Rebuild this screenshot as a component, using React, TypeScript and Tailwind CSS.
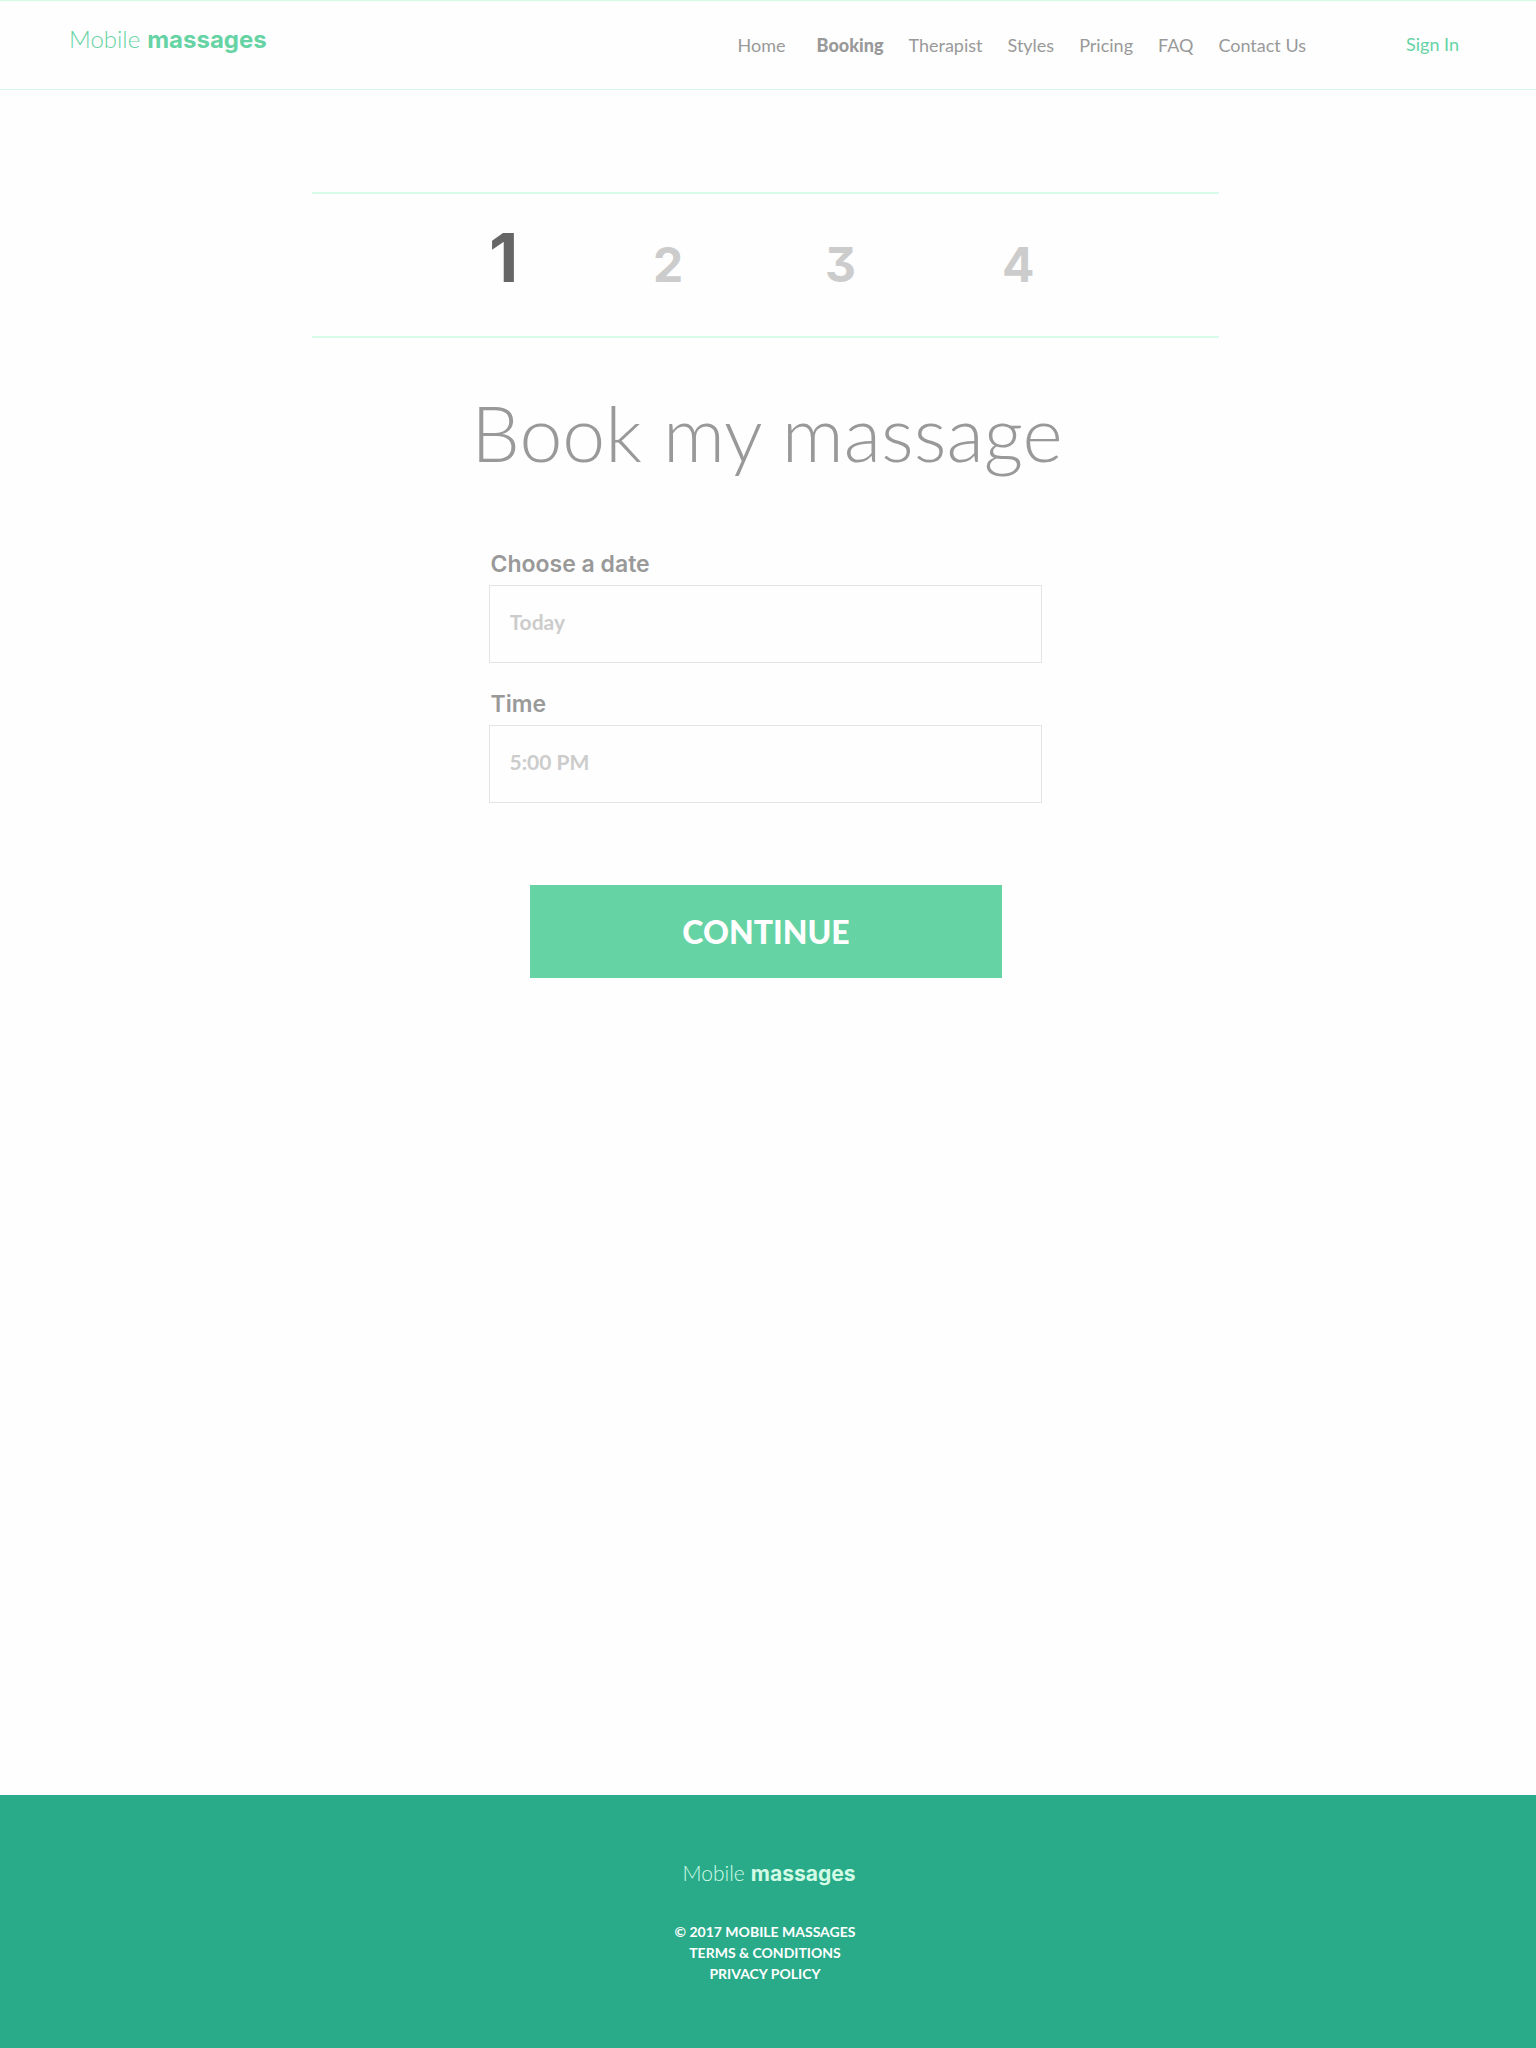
const links = ["Home", "Booking", "Therapist", "Styles", "Pricing", "FAQ", "Contact Us"];
const steps = [1, 2, 3, 4];
const current = 1;

function Field({ id, label, placeholder }: { id: string; label: string; placeholder: string }) {
  return (
    <div className="flex flex-col">
      <label htmlFor={id} className="pl-0.5 font-[Inter,sans-serif] text-[23px] leading-[30px] font-semibold text-[#999999]">
        {label}
      </label>
      <input
        id={id}
        type="text"
        placeholder={placeholder}
        className="mt-1.5 h-[78px] w-full border border-[#e4e4e4] bg-transparent px-5 pb-1.5 text-[21px] font-bold text-[#999999] outline-none placeholder:text-[#cccccc] placeholder:opacity-100 focus:border-[#66d3a5]"
      />
    </div>
  );
}

export default function App() {
  return (
    <div className="flex min-h-screen flex-col bg-[#fefefe] font-[Lato,sans-serif]">
      <header className="flex h-[90px] items-start border-y border-t-[#d3fbe6] border-b-[#d7f6ea] pr-[77px] pl-[69px]">
        <a href="#home" className="flex items-baseline gap-[7px] pt-5 text-[24px] leading-9 text-[#66d3a5]">
          <span className="font-light">Mobile</span>
          <span className="font-[Inter,sans-serif] font-bold">massages</span>
        </a>
        <nav aria-label="Main" className="ml-auto pt-[30px]">
          <ul className="flex gap-[25px] text-[18px] leading-7 text-[#999999]">
            {links.map((link) => (
              <li key={link} className={link === "Booking" ? "pl-1.5 font-black" : ""}>
                <a href={"#" + link.toLowerCase().replace(" ", "-")}>{link}</a>
              </li>
            ))}
          </ul>
        </nav>
        <a href="#sign-in" className="ml-[100px] pt-[29px] text-[18px] leading-7 text-[#66d3a5]">
          Sign In
        </a>
      </header>

      <main className="flex flex-col items-center pr-1.5">
        <section aria-label="Booking steps" className="mt-[102px] w-full max-w-[907px] border-y-2 border-[#d8fbe9]">
          <ol className="mx-auto grid h-[142px] max-w-[552px] grid-cols-[164fr_172fr_177fr_39fr] items-baseline pt-[21px] font-[Inter,sans-serif] font-bold">
            {steps.map((step) => (
              <li
                key={step}
                aria-current={step === current ? "step" : undefined}
                className={
                  step === current
                    ? "text-[68px] leading-[84px] text-[#666666]"
                    : "text-[48px] leading-[60px] text-[#cccccc] [font-feature-settings:'cv09']"
                }
              >
                {step}
              </li>
            ))}
          </ol>
        </section>

        <h1 className="mt-[46px] pl-1 text-[77px] leading-[96px] font-light text-[#999999]">
          Book my massage
        </h1>

        <form className="mt-[69px] flex w-full max-w-[553px] flex-col gap-[26px]" onSubmit={(e) => e.preventDefault()}>
          <Field id="date" label="Choose a date" placeholder="Today" />
          <Field id="time" label="Time" placeholder="5:00 PM" />
          <div className="mt-[56px] flex justify-center pl-0.5">
            <button
              type="submit"
              className="h-[93px] w-full max-w-[472px] bg-[#66d3a5] text-[32px] font-black text-white"
            >
              CONTINUE
            </button>
          </div>
        </form>
      </main>

      <footer className="mt-auto flex h-[253px] flex-col items-center bg-[#29ab8a] pt-16 text-white">
        <a href="#home" className="flex items-baseline gap-[6px] pl-0.5 text-[21px] leading-7 text-[#d3fbe6]">
          <span className="font-light">Mobile</span>
          <span className="font-[Inter,sans-serif] font-bold">massages</span>
        </a>
        <div className="mt-[33px] flex flex-col items-center pr-1.5 text-[14px] leading-[21px] font-bold">
          <p>© 2017 MOBILE MASSAGES</p>
          <a href="#terms">TERMS &amp; CONDITIONS</a>
          <a href="#privacy">PRIVACY POLICY</a>
        </div>
      </footer>
    </div>
  );
}
